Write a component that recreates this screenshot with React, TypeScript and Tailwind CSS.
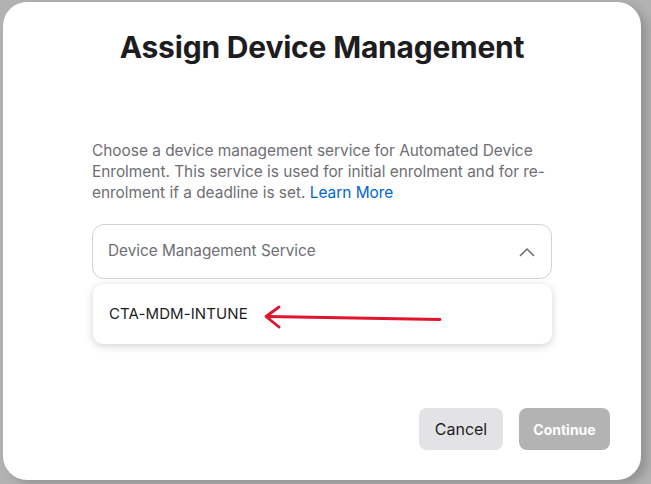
import React from 'react';

const ChevronUp = () => (
  <svg width="16" height="10" viewBox="0 0 16 10" fill="none">
    <path d="M1.5 8.5L8 2l6.5 6.5" stroke="#6e6e73" strokeWidth="1.6" strokeLinecap="round" strokeLinejoin="round" />
  </svg>
);

// hand-drawn red annotation arrow
const RedArrow = () => (
  <svg width="190" height="30" viewBox="0 0 190 30" fill="none">
    <path d="M188 17.5L16 14.5" stroke="#e0142c" strokeWidth="2.8" strokeLinecap="round" />
    <path d="M27 5L14 14.5L27 25" stroke="#e0142c" strokeWidth="2.8" strokeLinecap="round" strokeLinejoin="round" />
  </svg>
);

export default function App() {
  return (
    <div className="h-[484px] w-[651px] bg-[#b2b2b2] pt-[2px] pl-[3px] overflow-hidden">
      <div
        className="relative w-[638px] h-[478px] bg-white rounded-[24px] shadow-[6px_4px_10px_rgba(0,0,0,0.18)] flex flex-col px-[89px]"
        style={{ fontFamily: 'Inter, "Liberation Sans", sans-serif' }}
      >
        <h1 className="mt-[26px] -mx-[40px] text-center text-[30px] font-bold text-[#1d1d1f] tracking-[-0.2px] leading-[38px]">
          Assign Device Management
        </h1>

        <p className="mt-[74px] text-[15.4px] leading-[21px] text-[#6e6e73]">
          Choose a device management service for Automated Device Enrolment. This service is used for initial enrolment and for re-enrolment if a deadline is set.{' '}
          <span className="text-[#0066cc]">Learn More</span>
        </p>

        <div className="mt-[21px] h-[55px] rounded-[12px] border border-[#d2d2d7] flex items-center justify-between pl-[15px] pr-[16px]">
          <span className="text-[15.3px] text-[#6e6e73]">Device Management Service</span>
          <ChevronUp />
        </div>

        <div className="relative mt-[5px] ml-[1px] h-[60px] rounded-[10px] bg-white shadow-[0_2px_8px_rgba(0,0,0,0.18)] flex items-center pl-[16px]">
          <span className="text-[15px] text-[#1d1d1f] tracking-[0.1px]">CTA-MDM-INTUNE</span>
          <div className="absolute left-[159px] top-[18px]">
            <RedArrow />
          </div>
        </div>

        <div className="mt-auto mb-[30px] -mr-[58px] flex justify-end gap-[16px]">
          <button className="h-[42px] w-[84px] rounded-[8px] bg-[#e3e3e6] text-[16px] text-[#1d1d1f]">
            Cancel
          </button>
          <button className="h-[42px] w-[91px] rounded-[8px] bg-[#b3b3b3] text-[14px] font-bold text-white">
            Continue
          </button>
        </div>
      </div>
    </div>
  );
}
